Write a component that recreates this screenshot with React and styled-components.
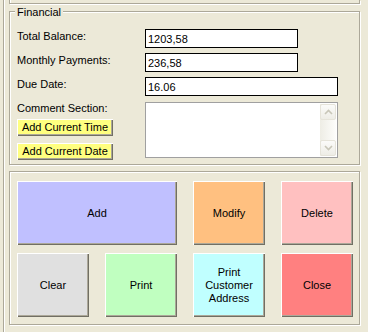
import React from 'react'
import styled, { createGlobalStyle } from 'styled-components'

const GlobalStyle = createGlobalStyle`
  body {
    margin: 0;
    background: #ece9d8;
    font-family: "Liberation Sans", Arial, sans-serif;
    font-size: 11px;
    color: #000;
  }
`;

const Frame = styled.div`
  width: 365px;
  height: 332px;
  margin-left: 3px;
  padding-left: 5px;
  box-sizing: border-box;
  border-left: 1px solid #aca899;
  box-shadow: inset 1px 0 0 #fff;
  overflow: hidden;
`;

const TopStub = styled.div`
  width: 351px;
  height: 4px;
  box-sizing: border-box;
  border: 1px solid #aca899;
  border-top: none;
  box-shadow: 1px 1px 0 #fff, inset 1px 0 0 #fff;
`;

const GroupBox = styled.div`
  position: relative;
  width: 351px;
  height: 154px;
  box-sizing: border-box;
  margin-top: ${props => props.gap}px;
  border: 1px solid #aca899;
  box-shadow: 1px 1px 0 #fff, inset 1px 1px 0 #fff;
  padding: ${props => props.pad};
`;

const Legend = styled.span`
  position: absolute;
  top: -6px;
  left: 5px;
  padding: 0 2px;
  line-height: 13px;
  background: #ece9d8;
`;

const Rows = styled.div`
  display: flex;
  flex-direction: column;
  gap: 5px;
`;

const Row = styled.div`
  display: flex;
  align-items: flex-start;
`;

const Label = styled.div`
  width: 128px;
  line-height: 15px;
  white-space: nowrap;
`;

const Field = styled.input`
  width: ${props => props.w}px;
  height: 19px;
  box-sizing: border-box;
  margin: 0;
  padding: 0 2px;
  border: 1px solid #000;
  background: #fff;
  font-family: inherit;
  font-size: 11px;
  outline: none;
`;

const LeftColumn = styled.div`
  width: 128px;
  display: flex;
  flex-direction: column;
  align-items: flex-start;
`;

const SmallButton = styled.button`
  width: 96px;
  height: 17px;
  margin-top: ${props => props.top}px;
  padding: 0;
  border: none;
  background: #ffff80;
  box-shadow: inset 1px 1px 0 #fff, inset -1px -1px 0 #716f64, inset -2px -2px 0 #aca899;
  font-family: inherit;
  font-size: 11px;
  line-height: 15px;
  color: #000;
`;

const CommentBox = styled.div`
  width: 193px;
  height: 56px;
  margin-top: 1px;
  box-sizing: border-box;
  border: 1px solid #a0a0a0;
  padding: 1px;
  background: #fff;
  display: flex;
`;

const CommentText = styled.textarea`
  flex: 1;
  margin: 0;
  padding: 1px 2px;
  border: none;
  resize: none;
  outline: none;
  font-family: inherit;
  font-size: 11px;
  background: #fff;
`;

const ScrollBar = styled.div`
  width: 16px;
  display: flex;
  flex-direction: column;
  justify-content: space-between;
  background: linear-gradient(to right, #eeede5, #fdfdfb);
`;

const ScrollButton = styled.div`
  width: 16px;
  height: 16px;
  box-sizing: border-box;
  border: 1px solid #e6e4da;
  border-radius: 2px;
  background: linear-gradient(#fbfbf9, #eeede6);
  display: flex;
  align-items: center;
  justify-content: center;
`;

const ButtonGrid = styled.div`
  display: grid;
  grid-template-columns: repeat(4, 72px);
  grid-template-rows: 64px 64px;
  column-gap: 16px;
  row-gap: 8px;
`;

const BigButton = styled.button`
  grid-column: span ${props => props.span || 1};
  margin: 0;
  padding: 0;
  border: none;
  background: ${props => props.color};
  box-shadow: inset 1px 1px 0 #fff, inset -1px -1px 0 #716f64, inset -2px -2px 0 #aca899;
  font-family: inherit;
  font-size: 11px;
  line-height: 13px;
  color: #000;
`;

const Arrow = ({ up }) => (
  <svg width="9" height="6" viewBox="0 0 9 6">
    <polyline
      points={up ? '1,5 4.5,1.5 8,5' : '1,1 4.5,4.5 8,1'}
      fill="none"
      stroke="#c8c6b8"
      strokeWidth="1.6"
    />
  </svg>
);

const App = () => {
  return (
    <>
      <GlobalStyle />
      <Frame>
        <TopStub />

        <GroupBox gap={7} pad="17px 7px 0 7px">
          <Legend>Financial</Legend>
          <Rows>
            <Row>
              <Label>Total Balance:</Label>
              <Field w={153} defaultValue="1203,58" />
            </Row>
            <Row>
              <Label>Monthly Payments:</Label>
              <Field w={153} defaultValue="236,58" />
            </Row>
            <Row>
              <Label>Due Date:</Label>
              <Field w={193} defaultValue="16.06" />
            </Row>
            <Row>
              <LeftColumn>
                <Label>Comment Section:</Label>
                <SmallButton top={3}>Add Current Time</SmallButton>
                <SmallButton top={7}>Add Current Date</SmallButton>
              </LeftColumn>
              <CommentBox>
                <CommentText />
                <ScrollBar>
                  <ScrollButton><Arrow up /></ScrollButton>
                  <ScrollButton><Arrow /></ScrollButton>
                </ScrollBar>
              </CommentBox>
            </Row>
          </Rows>
        </GroupBox>

        <GroupBox gap={6} pad="9px 7px 0 7px">
          <ButtonGrid>
            <BigButton span={2} color="#c0c0ff">Add</BigButton>
            <BigButton color="#ffc080">Modify</BigButton>
            <BigButton color="#ffc0c0">Delete</BigButton>
            <BigButton color="#e0e0e0">Clear</BigButton>
            <BigButton color="#c0ffc0">Print</BigButton>
            <BigButton color="#c0ffff">Print<br />Customer<br />Address</BigButton>
            <BigButton color="#ff8080">Close</BigButton>
          </ButtonGrid>
        </GroupBox>
      </Frame>
    </>
  )
};

export default App
